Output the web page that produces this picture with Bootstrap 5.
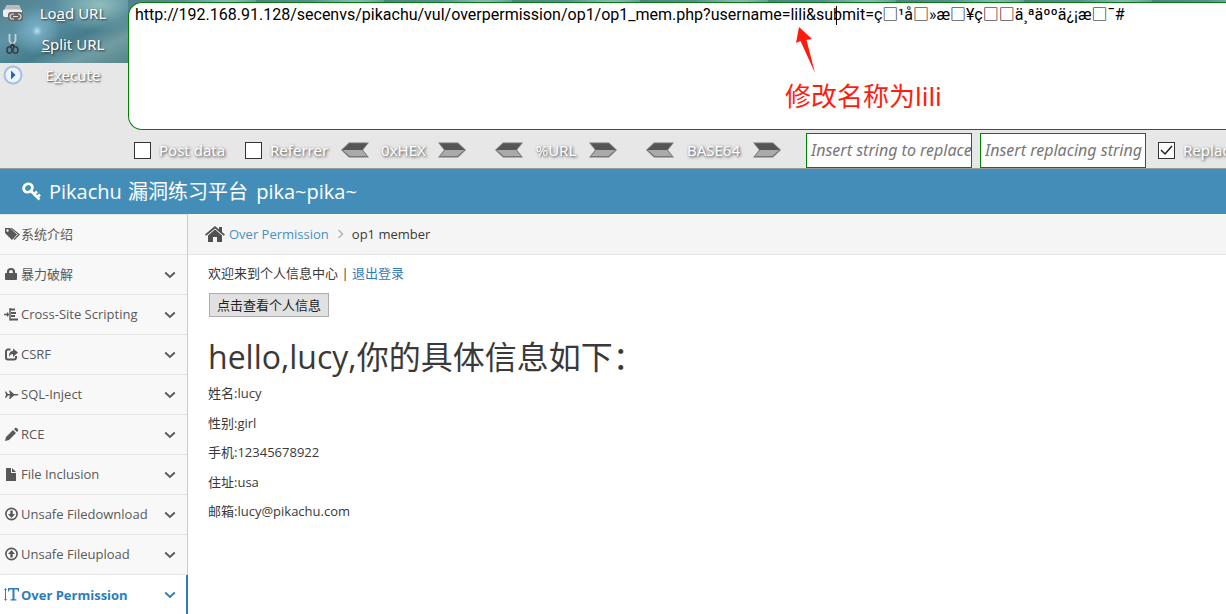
<!DOCTYPE html>
<html lang="zh-CN">
<head>
<meta charset="utf-8">
<meta name="viewport" content="width=device-width, initial-scale=1">
<title>Pikachu</title>
<link href="https://cdn.jsdelivr.net/npm/bootstrap@5.3.0/dist/css/bootstrap.min.css" rel="stylesheet">
<style>
body{font-family:"Open Sans","Noto Sans CJK SC",sans-serif;font-size:13px;line-height:20px;color:#393939;background:#fff;overflow-x:hidden}
a{color:#337ab7;text-decoration:none}
svg{display:block;flex:none}
/* request toolbar */
.hackbar{font-family:"Noto Sans","Noto Sans CJK SC",sans-serif;background:#e7e7e7;border-bottom:1px solid #999;overflow:hidden}
.sky{height:63px;background:radial-gradient(circle at 37px 31px,#b9e0f5 0,#8fc4de88 5px,#74a9c000 24px),radial-gradient(ellipse at 100px 5px,#8fbcbc 0,#8fbcbc00 46px),linear-gradient(155deg,#527f8d 0,#5d93a6 35%,#467d8c 60%,#719ca3 78%,#56858c 100%);background-size:128px 63px}
.hackbar .layer{position:relative;z-index:1}
.tools{width:128px}
.tool{height:31px;border:0;background:none;padding:0 2px 6px 3px;color:#fff;text-shadow:1px 1px 2px #333;font-size:15px;line-height:24px}
.tool span{width:100px}
.urlbox{font-family:Roboto,"Noto Sans","Noto Sans CJK SC",sans-serif;height:128px;margin-top:2px;border:1px solid #008000;border-radius:14px 0 0 14px;border-right:0;padding:0 0 0 6px;resize:none;color:#000;font-size:16px;line-height:24px;background:#fff;overflow:hidden;outline:0;display:block}
.caret{position:absolute;left:708px;top:6px;width:1px;height:19px;background:#000}
.note{position:absolute;left:657px;top:27px;color:#ff1c0f;font-size:26px;line-height:36px;white-space:nowrap}
.note svg{margin:0 0 5px 9px}
.options{padding:2px 0 0 134px;height:38px;white-space:nowrap;color:#fff;text-shadow:1px 1px 3px #333;font-size:15px}
.tick{appearance:none;width:17px;height:17px;border:1px solid #333;background:#fff;margin:0;flex:none}
.tick:checked{background:#fff url("data:image/svg+xml,%3Csvg xmlns='http://www.w3.org/2000/svg' viewBox='0 0 15 15'%3E%3Cpath d='M2 7l4 4 7-8' fill='none' stroke='%23222' stroke-width='1.5'/%3E%3C/svg%3E")}
.check1{width:111px}.check2{width:96px}
.codec button{border:0;background:none;padding:0}
.codec.first{width:125px;margin-right:29px}
.codec.second{width:122px;margin-right:29px}
.codec.third{width:135px;margin-right:25px}
.swap{width:166px;height:35px;border:1px solid #008000;padding:0 0 0 4px;font-size:16px;font-style:italic;margin-right:8px;flex:none;border-radius:0;background:#fff}
.swap::placeholder{color:#777;opacity:1}
/* site */
.topbar{height:45px;background:#438eb9;color:#fff;font-size:20px;padding-left:22px}
.topbar a{color:#fff}
.topbar .zh{padding:0 3px 0 1px}
.side{width:188px;background:#f8f8f8;border-right:1px solid #ccc;border-top:1px solid #e5e5e5;flex:none}
.side a{height:40px;color:#585858;border-bottom:1px solid #e5e5e5;padding:0 11px 0 4px}
.side a span{padding-bottom:1px}
.side a svg:first-child{width:17px;height:16px}
.side a.current{background:#fff;color:#2b7dbc;font-weight:700;border-right:2px solid #2b7dbc;margin-right:-1px;padding-right:10px;border-bottom:0}
.trail{height:41px;background:#f5f5f5;border-bottom:1px solid #e5e5e5;padding-left:17px}
.trail a{color:#4c8fbd}
.content{padding:8px 20px}
.view{border:1px solid #adadad;background:#e1e1e1;padding:1px 7px;color:#222;line-height:20px;margin:10px 0 20px 1px}
.content h1{font-size:32px;line-height:40px;font-weight:400;margin-bottom:6px}
.content p{line-height:20px;margin:0}
.content .facts p{line-height:21px;margin-bottom:9px}
.content .facts p:nth-child(even){line-height:20px}
</style>
</head>
<body>
<svg class="d-none" aria-hidden="true">
<symbol id="left" viewBox="0 0 28 16"><path d="M0 8L8 .5H28L22 8l6 7.500H8z" fill="#777"/><path d="M1.500 8L8.500 1.500H26L21 8l5 6H8.500z" fill="#555"/><path d="M1.500 8H21l5 6H8.500z" fill="#aaa"/></symbol>
<symbol id="right" viewBox="0 0 28 16"><path d="M28 8L20 .5H0L6 8l-6 7.500h20z" fill="#777"/><path d="M26.500 8L19.500 1.500H2L7 8l-5 6h17.500z" fill="#555"/><path d="M26.500 8H7l-5 6h17.500z" fill="#aaa"/></symbol>
<symbol id="down" viewBox="0 0 12 8"><path d="M1.200 1.500L6 6l4.800-4.500" fill="none" stroke="currentColor" stroke-width="1.800"/></symbol>
</svg>

<header class="hackbar position-relative">
  <div class="sky position-absolute top-0 start-0 w-100"></div>
  <div class="layer d-flex">
    <div class="tools d-flex flex-column">
      <button class="tool d-flex align-items-center" type="button"><svg width="20" height="20" viewBox="0 0 20 20"><path d="M4 2h12l2 5v7H1V7z" fill="#d9d9d9"/><path d="M4 2h12l2 4H2z" fill="#bbb"/><path d="M0 7h19v7H2q-2 0-2-2z" fill="#eee"/><rect x="5" y="9" width="15" height="9" rx="3" fill="#666"/><path d="M11 11H9.500a2.500 2.500 0 000 5H11m4-5h.500a2.500 2.500 0 010 5H15m-5-2.500h5" fill="none" stroke="#ddd" stroke-width="1.200"/></svg><span>Lo<u>a</u>d URL</span></button>
      <button class="tool d-flex align-items-center" type="button"><svg width="20" height="22" viewBox="0 0 20 22"><path d="M6.500 1v7l3 4 3-4V1" fill="none" stroke="#c9d2d5" stroke-width="1.800"/><path d="M9.500 11l-2 3m2-3l2 3" stroke="#333" stroke-width="2"/><ellipse cx="6.500" cy="17" rx="2.500" ry="3.300" fill="none" stroke="#3b4144" stroke-width="1.600"/><ellipse cx="12.500" cy="17" rx="2.500" ry="3.300" fill="none" stroke="#3b4144" stroke-width="1.600"/></svg><span><u>S</u>plit URL</span></button>
      <button class="tool d-flex align-items-center" type="button"><svg width="20" height="20" viewBox="0 0 20 20"><circle cx="10" cy="10" r="9.500" fill="#a4bfdf"/><circle cx="10" cy="10" r="7.500" fill="#edf3fa"/><path d="M8 5.500l4.500 4.500L8 14.500z" fill="#2864b4"/></svg><span>E<u>x</u>ecute</span></button>
    </div>
    <div class="position-relative flex-grow-1">
      <textarea class="urlbox w-100" aria-label="URL" spellcheck="false">http://192.168.91.128/secenvs/pikachu/vul/overpermission/op1/op1_mem.php?username=lili&amp;submit=ç□¹å□»æ□¥ç□□ä¸ªäººä¿¡æ□¯#</textarea>
      <span class="caret"></span>
      <div class="note"><svg width="22" height="46" viewBox="0 0 22 46"><path d="M5 0L18 12 12.500 13 21 46 6.500 14 2 16z" fill="#ff1c0f"/></svg>修改名称为lili</div>
    </div>
  </div>
  <div class="layer options d-flex align-items-center">
    <label class="check1 d-flex align-items-center gap-2 flex-shrink-0"><input class="tick" type="checkbox">Post data</label>
    <label class="check2 d-flex align-items-center gap-2 flex-shrink-0"><input class="tick" type="checkbox">Referrer</label>
    <div class="codec first d-flex align-items-center justify-content-between flex-shrink-0"><button type="button" aria-label="Decode hex"><svg width="28" height="16"><use href="#left"/></svg></button>0xHEX<button type="button" aria-label="Encode hex"><svg width="28" height="16"><use href="#right"/></svg></button></div>
    <div class="codec second d-flex align-items-center justify-content-between flex-shrink-0"><button type="button" aria-label="Decode URL"><svg width="28" height="16"><use href="#left"/></svg></button>%URL<button type="button" aria-label="Encode URL"><svg width="28" height="16"><use href="#right"/></svg></button></div>
    <div class="codec third d-flex align-items-center justify-content-between flex-shrink-0"><button type="button" aria-label="Decode base64"><svg width="28" height="16"><use href="#left"/></svg></button>BASE64<button type="button" aria-label="Encode base64"><svg width="28" height="16"><use href="#right"/></svg></button></div>
    <input class="swap" type="text" placeholder="Insert string to replace" aria-label="Insert string to replace">
    <input class="swap" type="text" placeholder="Insert replacing string" aria-label="Insert replacing string">
    <label class="d-flex align-items-center gap-2 ms-1"><input class="tick" type="checkbox" checked>Replace</label>
  </div>
</header>

<nav class="topbar d-flex align-items-center"><a class="d-flex align-items-center gap-2" href="#"><svg width="19" height="19" viewBox="0 0 19 19" fill="none" stroke="#fff"><ellipse cx="6" cy="6" rx="4.500" ry="4" stroke-width="2.800" transform="rotate(-35 6 6)"/><path d="M9 9l8.500 8.500M12 12.500l3-3m0 6l3-3" stroke-width="2.600"/></svg><span>Pikachu <span class="zh">漏洞练习平台</span> pika~pika~</span></a></nav>

<div class="d-flex">
  <nav class="side">
    <a class="d-flex align-items-center" href="#"><svg viewBox="0 0 17 16" fill="currentColor"><path fill-rule="evenodd" d="M1 1h5l7 6.500-5 5.500L1 6zM3.500 2.300a1.200 1.200 0 100 2.400 1.200 1.200 0 000-2.400z"/><path d="M8 1l8 6.500-5.500 5.500-1-.8L14 7.500 6.500 1z"/></svg><span>系统介绍</span></a>
    <a class="d-flex align-items-center" href="#"><svg viewBox="0 0 17 16"><path d="M1.500 6.500h11v6h-11z" fill="currentColor" stroke="currentColor" stroke-linejoin="round"/><path d="M4 7V5a3 3 0 016 0v2" fill="none" stroke="currentColor" stroke-width="2.200"/></svg><span class="me-auto">暴力破解</span><svg width="12" height="8"><use href="#down"/></svg></a>
    <a class="d-flex align-items-center" href="#"><svg viewBox="0 0 17 16" fill="none" stroke="currentColor"><path d="M0 7.500h5M6 1v12.500M3.500 5.500v4" stroke-width="1.400"/><path d="M6 2.500h5M7 6h5M7 9h4M6 12.500h8" stroke-width="2"/></svg><span class="me-auto">Cross-Site Scripting</span><svg width="12" height="8"><use href="#down"/></svg></a>
    <a class="d-flex align-items-center" href="#"><svg viewBox="0 0 17 16" fill="none" stroke="currentColor"><path d="M6.500 2.500H4a2 2 0 00-2 2v6a2 2 0 002 2h6a2 2 0 002-2V9" stroke-width="2"/><path d="M5 10c0-4 1-6 4-6V1.500L14 5.500 9 10V7C7 7 6 8 5 10z" fill="currentColor" stroke="none"/></svg><span class="me-auto">CSRF</span><svg width="12" height="8"><use href="#down"/></svg></a>
    <a class="d-flex align-items-center" href="#"><svg viewBox="0 0 17 16" fill="currentColor"><path d="M1 4.500h1L4 7h2L5 3.500h1L10 7h3l2 .8-2 .8h-3L6 12H5l1-3.500H4L2 11H1l1-3.200z"/></svg><span class="me-auto">SQL-Inject</span><svg width="12" height="8"><use href="#down"/></svg></a>
    <a class="d-flex align-items-center" href="#"><svg viewBox="0 0 17 16" fill="currentColor"><path d="M1 14l1-4 7-7 3 3-7 7zM10 2l1-1q1-.7 2 .3l.7.7q1 1 .3 2l-1 1z"/></svg><span class="me-auto">RCE</span><svg width="12" height="8"><use href="#down"/></svg></a>
    <a class="d-flex align-items-center" href="#"><svg viewBox="0 0 17 16" fill="currentColor"><path d="M2 1h5v5h5v8H2zM8 1l4 4H8z"/></svg><span class="me-auto">File Inclusion</span><svg width="12" height="8"><use href="#down"/></svg></a>
    <a class="d-flex align-items-center" href="#"><svg viewBox="0 0 17 16" fill="currentColor"><circle cx="7.500" cy="7" r="5.600" fill="none" stroke="currentColor" stroke-width="1.600"/><path d="M6.300 3.500h2.400V7H11l-3.500 4L4 7h2.300z"/></svg><span class="me-auto">Unsafe Filedownload</span><svg width="12" height="8"><use href="#down"/></svg></a>
    <a class="d-flex align-items-center" href="#"><svg viewBox="0 0 17 16" fill="currentColor"><circle cx="7.500" cy="7" r="5.600" fill="none" stroke="currentColor" stroke-width="1.600"/><path d="M6.300 10.500h2.400V7H11L7.500 3 4 7h2.300z"/></svg><span class="me-auto">Unsafe Fileupload</span><svg width="12" height="8"><use href="#down"/></svg></a>
    <a class="current d-flex align-items-center" href="#" aria-current="page"><svg viewBox="0 0 17 16" fill="currentColor"><path d="M0 3h1v9H0l1.500 2L3 12H2V3h1L1.500 1zM4 1h11v3.500h-1l-.6-2H10.500V12l2 .5v1H6.500v-1l2-.5V2.500H5.600L5 4.500H4z"/></svg><span class="me-auto">Over Permission</span><svg width="12" height="8"><use href="#down"/></svg></a>
  </nav>
  <main class="flex-grow-1">
    <nav class="trail d-flex align-items-center" aria-label="breadcrumb"><svg class="me-1" width="20" height="18" viewBox="0 0 20 18" fill="#505050"><path d="M10 1L0 9.500l1.200 1.300L10 3.500l8.800 7.300L20 9.500l-3-2.600V2h-3v2.500z"/><path d="M3 10.500l7-6 7 6V17h-5v-5H8v5H3z"/></svg><a href="#">Over Permission</a><svg class="mx-2" width="7" height="10" viewBox="0 0 7 10"><path d="M1.500 1l4 4-4 4" fill="none" stroke="#b2b6bf" stroke-width="1.500"/></svg><span>op1 member</span></nav>
    <section class="content">
      <p>欢迎来到个人信息中心 | <a href="#">退出登录</a></p>
      <button class="view d-block" type="button">点击查看个人信息</button>
      <h1>hello,lucy,你的具体信息如下：</h1>
      <div class="facts"><p>姓名:lucy</p><p>性别:girl</p><p>手机:12345678922</p><p>住址:usa</p><p>邮箱:lucy@pikachu.com</p></div>
    </section>
  </main>
</div>
<script src="https://cdn.jsdelivr.net/npm/bootstrap@5.3.0/dist/js/bootstrap.bundle.min.js"></script>
</body>
</html>
